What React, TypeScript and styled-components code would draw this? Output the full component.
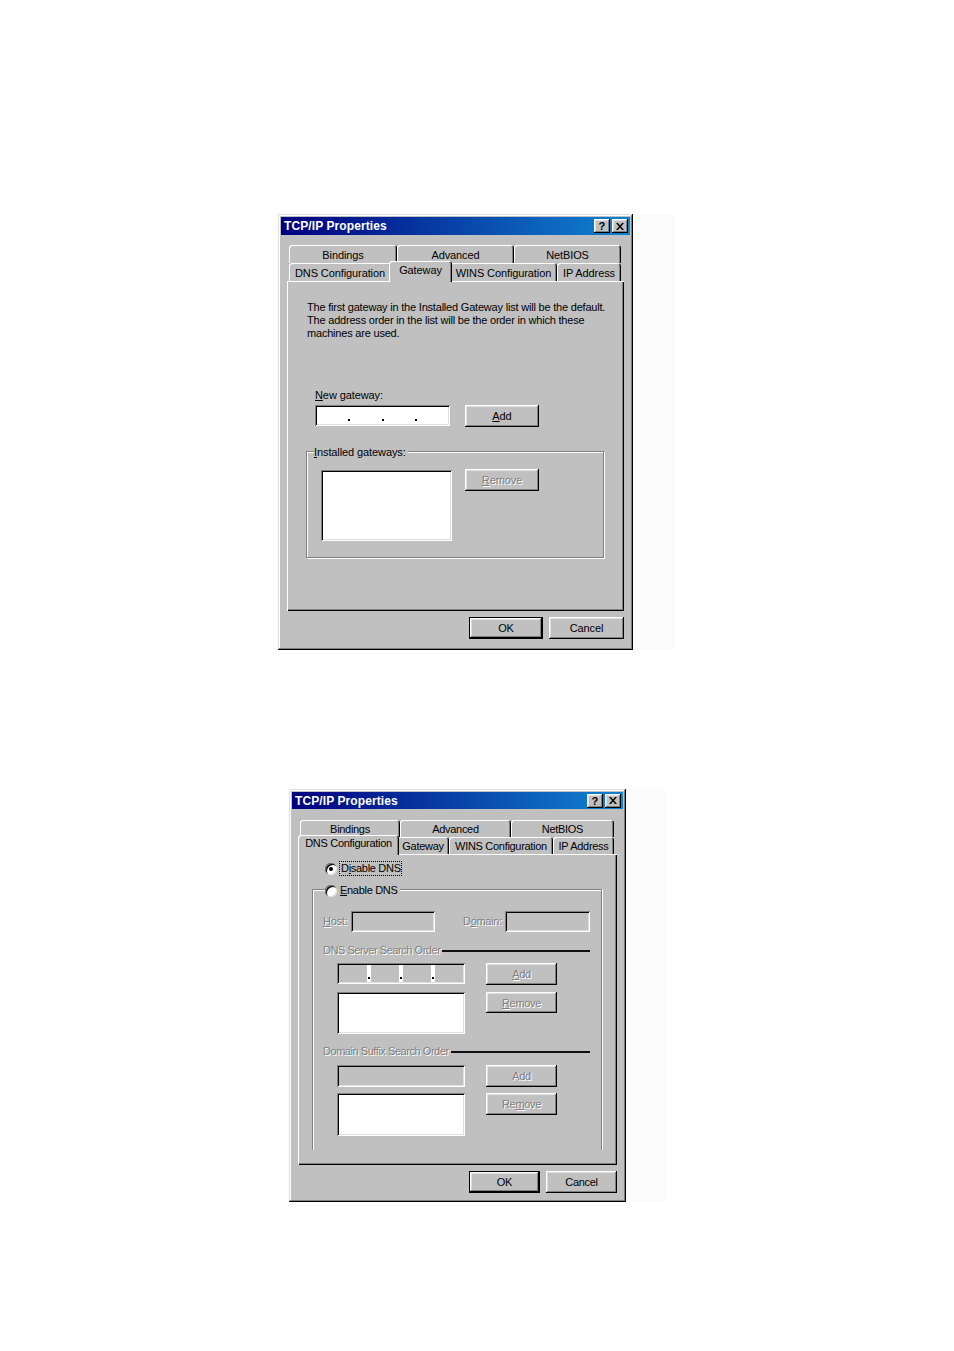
import React from "react";
import styled, { createGlobalStyle, css } from "styled-components";

const Global = createGlobalStyle`
  html, body { margin: 0; padding: 0; background: #ffffff; }
  body {
    font-family: "Liberation Sans", Arial, sans-serif;
    font-size: 11px;
    color: #000;
  }
`;

const raised = css`
  box-shadow: inset -1px -1px #000, inset 1px 1px #fff, inset -2px -2px #808080,
    inset 2px 2px #dfdfdf;
`;

const sunken = css`
  box-shadow: inset 1px 1px #808080, inset -1px -1px #fff, inset 2px 2px #000,
    inset -2px -2px #dfdfdf;
`;

const disabledText = css`
  color: #808080;
  text-shadow: 1px 1px 0 #fff;
`;

const Page = styled.div`
  display: flex;
  flex-direction: column;
  padding-top: 214px;
  padding-bottom: 149px;
`;

const Frame = styled.div<{ $left: number; $top: number }>`
  display: flex;
  margin-left: ${(p) => p.$left}px;
  margin-top: ${(p) => p.$top}px;
`;

const Halo = styled.div<{ $w: number }>`
  width: ${(p) => p.$w}px;
  background: #fbfbfb;
`;

const Dialog = styled.div<{ $w: number; $h: number; $condensed?: boolean }>`
  box-sizing: border-box;
  width: ${(p) => p.$w}px;
  height: ${(p) => p.$h}px;
  padding: 3px;
  background: #c0c0c0;
  display: flex;
  flex-direction: column;
  letter-spacing: ${(p) => (p.$condensed ? "-0.3px" : "-0.1px")};
  box-shadow: inset -1px -1px #000, inset 1px 1px #dfdfdf, inset -2px -2px #808080,
    inset 2px 2px #fff;
`;

const TitleBar = styled.div<{ $h: number }>`
  height: ${(p) => p.$h}px;
  flex: none;
  display: flex;
  align-items: center;
  justify-content: space-between;
  padding: 0 2px 0 3px;
  background: linear-gradient(90deg, #000080 0%, #0a50b0 60%, #1084d0 100%);
  color: #fff;
  font-weight: bold;
  font-size: 12px;
  letter-spacing: 0.1px;
`;

const TitleButtons = styled.div`
  display: flex;
  gap: 2px;
`;

const TitleBtn = styled.div`
  box-sizing: border-box;
  width: 16px;
  height: 14px;
  background: #c0c0c0;
  display: flex;
  align-items: center;
  justify-content: center;
  color: #000;
  font-weight: bold;
  font-size: 11px;
  ${raised};
`;

const TabArea = styled.div<{ $gap: number }>`
  margin: ${(p) => p.$gap}px 6px 0 6px;
  display: flex;
  flex-direction: column;
`;

const TabRow = styled.div<{ $h: number; $pad: number }>`
  display: flex;
  height: ${(p) => p.$h}px;
  padding-left: ${(p) => p.$pad}px;
`;

const Tab = styled.div<{ $w: number; $sel?: boolean }>`
  box-sizing: border-box;
  width: ${(p) => p.$w}px;
  height: 100%;
  flex: none;
  display: flex;
  align-items: center;
  justify-content: center;
  padding-top: 1px;
  background: #c0c0c0;
  border-radius: 3px 3px 0 0;
  box-shadow: inset 1px 1px #fff, inset -1px 0 #000, inset -2px 0 #808080;
  white-space: nowrap;
  ${(p) =>
    p.$sel &&
    css`
      position: relative;
      z-index: 1;
      width: ${p.$w + 4}px;
      height: calc(100% + 3px);
      margin: -2px -2px -1px -2px;
      padding: 0 0 4px 0;
    `}
`;

const Panel = styled.div<{ $h: number }>`
  box-sizing: border-box;
  height: ${(p) => p.$h}px;
  display: flex;
  flex-direction: column;
  align-items: flex-start;
  box-shadow: inset 1px 1px #fff, inset -1px -1px #000, inset -2px -2px #808080;
`;

const Footer = styled.div`
  display: flex;
  justify-content: flex-end;
  gap: 6px;
  margin: 6px 6px 0 0;
`;

const Button = styled.div<{
  $w: number;
  $h?: number;
  $default?: boolean;
  $disabled?: boolean;
}>`
  box-sizing: border-box;
  width: ${(p) => p.$w}px;
  height: ${(p) => p.$h ?? 22}px;
  flex: none;
  display: flex;
  align-items: center;
  justify-content: center;
  background: #c0c0c0;
  ${raised};
  ${(p) =>
    p.$default &&
    css`
      border: 1px solid #000;
    `}
  ${(p) => p.$disabled && disabledText};
`;

const Desc = styled.div`
  margin: 20px 0 0 20px;
  line-height: 13px;
  white-space: nowrap;
  letter-spacing: -0.2px;
`;

const Label = styled.div<{ $ml: number; $mt: number }>`
  margin: ${(p) => p.$mt}px 0 0 ${(p) => p.$ml}px;
  line-height: 13px;
  height: 13px;
`;

const Row = styled.div<{ $ml: number; $mt: number; $gap: number }>`
  display: flex;
  align-items: flex-start;
  margin: ${(p) => p.$mt}px 0 0 ${(p) => p.$ml}px;
  gap: ${(p) => p.$gap}px;
`;

const Field = styled.div<{ $w: number; $h: number; $gray?: boolean }>`
  box-sizing: border-box;
  width: ${(p) => p.$w}px;
  height: ${(p) => p.$h}px;
  flex: none;
  background: ${(p) => (p.$gray ? "#c0c0c0" : "#fff")};
  ${sunken};
`;

const IpField = styled.div<{ $w: number; $h: number }>`
  box-sizing: border-box;
  width: ${(p) => p.$w}px;
  height: ${(p) => p.$h}px;
  flex: none;
  display: flex;
  padding: 2px;
  background: #fff;
  ${sunken};
`;

const IpSeg = styled.div<{ $gray?: boolean }>`
  flex: 1;
  background: ${(p) => (p.$gray ? "#c0c0c0" : "#fff")};
`;

const IpDot = styled.div<{ $w: number }>`
  width: ${(p) => p.$w}px;
  flex: none;
  display: flex;
  align-items: flex-end;
  justify-content: center;
  padding-bottom: 3px;
  &::after {
    content: "";
    width: 2px;
    height: 2px;
    background: #000;
  }
`;

const Group = styled.div<{ $ml: number; $mt: number; $w: number; $h: number; $open?: boolean }>`
  position: relative;
  box-sizing: border-box;
  margin: ${(p) => p.$mt}px 0 0 ${(p) => p.$ml}px;
  width: ${(p) => p.$w}px;
  height: ${(p) => p.$h}px;
  border: 1px solid #808080;
  box-shadow: inset 1px 1px #fff, 1px 1px #fff;
  ${(p) =>
    p.$open &&
    css`
      border-bottom: none;
      box-shadow: inset 1px 1px #fff, 1px 0 #fff;
    `}
`;

const Legend = styled.div<{ $left: number }>`
  position: absolute;
  top: -6px;
  left: ${(p) => p.$left}px;
  padding: 0 2px 0 0;
  height: 13px;
  line-height: 13px;
  display: flex;
  align-items: center;
  gap: 3px;
  background: #c0c0c0;
`;

const GroupBody = styled.div<{ $pt: number; $pl: number; $pr?: number }>`
  display: flex;
  flex-direction: column;
  padding: ${(p) => p.$pt}px ${(p) => p.$pr ?? 0}px 0 ${(p) => p.$pl}px;
`;

const Radio = styled.div<{ $checked?: boolean }>`
  box-sizing: border-box;
  width: 12px;
  height: 12px;
  flex: none;
  border-radius: 50%;
  background: #fff;
  display: flex;
  align-items: center;
  justify-content: center;
  box-shadow: inset 1px 1px #808080, inset -1px -1px #dfdfdf, inset 2px 2px #000;
  &::after {
    content: "";
    width: 4px;
    height: 4px;
    border-radius: 50%;
    background: ${(p) => (p.$checked ? "#000" : "transparent")};
  }
`;

const RadioRow = styled.div<{ $ml: number; $mt: number }>`
  display: flex;
  align-items: center;
  gap: 2px;
  margin: ${(p) => p.$mt}px 0 0 ${(p) => p.$ml}px;
  height: 15px;
`;

const FocusLabel = styled.span`
  border: 1px dotted #000;
  padding: 0 0 0 1px;
  line-height: 13px;
`;

const FieldLabel = styled.div<{ $w: number; $disabled?: boolean }>`
  width: ${(p) => p.$w}px;
  flex: none;
  line-height: 21px;
  ${(p) => p.$disabled && disabledText};
`;

const Heading = styled.div<{ $mt: number }>`
  display: flex;
  align-items: center;
  gap: 2px;
  margin-top: ${(p) => p.$mt}px;
  height: 13px;
  line-height: 13px;
  letter-spacing: -0.45px;
  ${disabledText};
  &::after {
    content: "";
    flex: 1;
    height: 2px;
    background: #111;
  }
`;

const CloseIcon = () => (
  <svg width="8" height="7" viewBox="0 0 8 7">
    <path d="M0 0h2l2 2.5L6 0h2L5 3.5 8 7H6L4 4.5 2 7H0l3-3.5z" fill="#000" />
  </svg>
);

const Title = ({ h }: { h: number }) => (
  <TitleBar $h={h}>
    <span>TCP/IP Properties</span>
    <TitleButtons>
      <TitleBtn>?</TitleBtn>
      <TitleBtn>
        <CloseIcon />
      </TitleBtn>
    </TitleButtons>
  </TitleBar>
);

type TabDef = { label: string; w: number; sel?: boolean };

const Tabs = ({ rows, h, pad }: { rows: TabDef[][]; h: number; pad: number[] }) => (
  <>
    {rows.map((row, i) => (
      <TabRow key={i} $h={h} $pad={pad[i]}>
        {row.map((t) => (
          <Tab key={t.label} $w={t.w} $sel={t.sel}>
            {t.label}
          </Tab>
        ))}
      </TabRow>
    ))}
  </>
);

const GatewayDialog = () => (
  <Dialog $w={355} $h={436}>
    <Title h={18} />
    <TabArea $gap={10}>
      <Tabs
        h={18}
        pad={[2, 2]}
        rows={[
          [
            { label: "Bindings", w: 108 },
            { label: "Advanced", w: 117 },
            { label: "NetBIOS", w: 107 },
          ],
          [
            { label: "DNS Configuration", w: 102 },
            { label: "Gateway", w: 59, sel: true },
            { label: "WINS Configuration", w: 107 },
            { label: "IP Address", w: 64 },
          ],
        ]}
      />
      <Panel $h={330}>
        <Desc>
          The first gateway in the Installed Gateway list will be the default.
          <br />
          The address order in the list will be the order in which these
          <br />
          machines are used.
        </Desc>
        <Label $ml={28} $mt={49}>
          <u>N</u>ew gateway:
        </Label>
        <Row $ml={28} $mt={3} $gap={15}>
          <IpField $w={135} $h={21}>
            <IpSeg />
            <IpDot $w={3} />
            <IpSeg />
            <IpDot $w={3} />
            <IpSeg />
            <IpDot $w={3} />
            <IpSeg />
          </IpField>
          <Button $w={74}>
            <span>
              <u>A</u>dd
            </span>
          </Button>
        </Row>
        <Group $ml={19} $mt={24} $w={298} $h={107}>
          <Legend $left={7}>
            <span>
              <u>I</u>nstalled gateways:
            </span>
          </Legend>
          <GroupBody $pt={18} $pl={14}>
            <Row $ml={0} $mt={0} $gap={13}>
              <Field $w={131} $h={71} />
              <Button $w={74} $disabled style={{ marginTop: -1 }}>
                <span>
                  <u>R</u>emove
                </span>
              </Button>
            </Row>
          </GroupBody>
        </Group>
      </Panel>
    </TabArea>
    <Footer>
      <Button $w={74} $default>
        OK
      </Button>
      <Button $w={75}>Cancel</Button>
    </Footer>
  </Dialog>
);

const DnsDialog = () => (
  <Dialog $w={337} $h={413} $condensed>
    <Title h={17} />
    <TabArea $gap={11}>
      <Tabs
        h={17}
        pad={[2, 2]}
        rows={[
          [
            { label: "Bindings", w: 100 },
            { label: "Advanced", w: 111 },
            { label: "NetBIOS", w: 103 },
          ],
          [
            { label: "DNS Configuration", w: 97, sel: true },
            { label: "Gateway", w: 52 },
            { label: "WINS Configuration", w: 104 },
            { label: "IP Address", w: 61 },
          ],
        ]}
      />
      <Panel $h={311}>
        <RadioRow $ml={27} $mt={7}>
          <Radio $checked />
          <FocusLabel>
            D<u>i</u>sable DNS
          </FocusLabel>
        </RadioRow>
        <Group $ml={14} $mt={13} $w={290} $h={261} $open>
          <Legend $left={12}>
            <Radio />
            <span>
              <u>E</u>nable DNS
            </span>
          </Legend>
          <GroupBody $pt={21} $pl={10} $pr={11}>
            <Row $ml={0} $mt={0} $gap={0}>
              <FieldLabel $w={28} $disabled>
                <u>H</u>ost:
              </FieldLabel>
              <Field $w={84} $h={21} $gray />
              <FieldLabel $w={42} $disabled style={{ marginLeft: 28 }}>
                D<u>o</u>main:
              </FieldLabel>
              <Field $w={85} $h={21} $gray />
            </Row>
            <Heading $mt={12}>DNS Server Search Order</Heading>
            <Row $ml={14} $mt={6} $gap={21}>
              <IpField $w={128} $h={21}>
                <IpSeg $gray />
                <IpDot $w={4} />
                <IpSeg $gray />
                <IpDot $w={4} />
                <IpSeg $gray />
                <IpDot $w={4} />
                <IpSeg $gray />
              </IpField>
              <Button $w={71} $disabled>
                <span>
                  <u>A</u>dd
                </span>
              </Button>
            </Row>
            <Row $ml={14} $mt={7} $gap={21}>
              <Field $w={128} $h={42} />
              <Button $w={71} $h={21} $disabled>
                <span>
                  <u>R</u>emove
                </span>
              </Button>
            </Row>
            <Heading $mt={11}>Domain Suffix Search Order</Heading>
            <Row $ml={14} $mt={7} $gap={21}>
              <Field $w={128} $h={22} $gray />
              <Button $w={71} $disabled>
                Add
              </Button>
            </Row>
            <Row $ml={14} $mt={6} $gap={21}>
              <Field $w={128} $h={43} />
              <Button $w={71} $disabled>
                <span>
                  Re<u>m</u>ove
                </span>
              </Button>
            </Row>
          </GroupBody>
        </Group>
      </Panel>
    </TabArea>
    <Footer>
      <Button $w={71} $default>
        OK
      </Button>
      <Button $w={71}>Cancel</Button>
    </Footer>
  </Dialog>
);

export default function App() {
  return (
    <>
      <Global />
      <Page>
        <Frame $left={278} $top={0}>
          <GatewayDialog />
          <Halo $w={42} />
        </Frame>
        <Frame $left={289} $top={139}>
          <DnsDialog />
          <Halo $w={40} />
        </Frame>
      </Page>
    </>
  );
}
